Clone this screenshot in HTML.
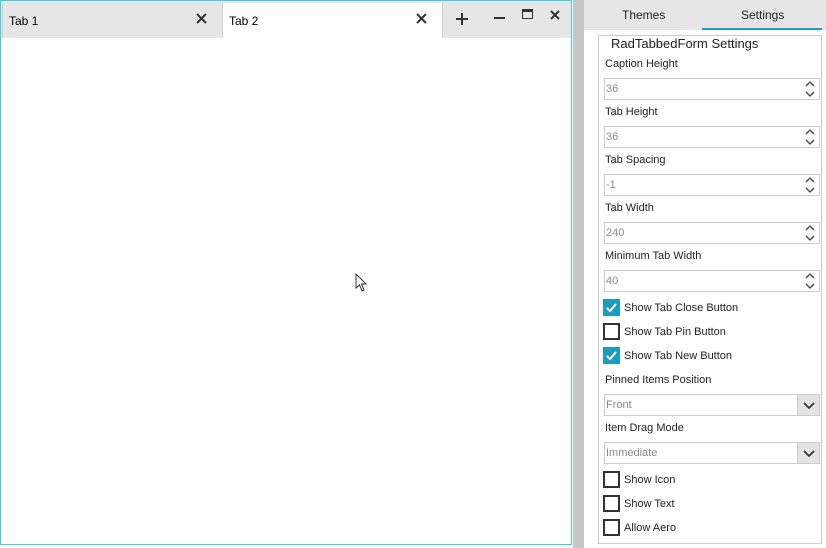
<!DOCTYPE html><html><head><style>
*{margin:0;padding:0;box-sizing:border-box}
body{width:826px;height:548px;background:#fff;font-family:"Liberation Sans",sans-serif;font-size:12px;color:#000;position:relative;overflow:hidden}
.a{position:absolute}
.lbl{position:absolute;left:605px;font-size:11px;color:#222}
.inp{position:absolute;left:604px;width:216px;height:22px;border:1px solid #ccc;background:#fff;color:#888;font-size:11px;padding:4px 0 0 1px}
.sp{position:absolute;right:0;top:0;width:18px;height:20px}
.dd{position:absolute;right:0;top:0;width:22px;height:20px;background:#e3e3e3;border-left:1px solid #ccc}
.cb{position:absolute;left:603px;width:17px;height:17px;border:2px solid #333;background:#fff}
.cb.on{background:#1b9bbf;border-color:#1b9bbf}
.ct{position:absolute;left:624px;font-size:11px;color:#222}
</style></head><body>
<div class="a" style="left:0;top:0;width:572px;height:545px;border:1px solid #3fcaea;background:#fff"></div>
<div class="a" style="left:1px;top:1px;width:570px;height:37px;background:#e6e6e6"></div>
<div class="a" style="left:2px;top:3px;width:220px;height:35px;border-left:1px solid #d0d0d0"></div>
<div class="a" style="left:9px;top:14px;font-size:12px">Tab 1</div>
<svg class="a" style="left:196px;top:13px" width="11" height="11"><path d="M1 1L10 10M10 1L1 10" stroke="#333" stroke-width="2"/></svg>
<div class="a" style="left:222px;top:3px;width:221px;height:35px;background:#fff;border-left:1px solid #d0d0d0;border-right:1px solid #d0d0d0"></div>
<div class="a" style="left:229px;top:14px;font-size:12px">Tab 2</div>
<svg class="a" style="left:416px;top:13px" width="11" height="11"><path d="M1 1L10 10M10 1L1 10" stroke="#333" stroke-width="2"/></svg>
<svg class="a" style="left:456px;top:13px" width="12" height="12"><path d="M6 0V12M0 6H12" stroke="#333" stroke-width="2"/></svg>
<div class="a" style="left:494px;top:17px;width:11px;height:2px;background:#333"></div>
<div class="a" style="left:522px;top:9px;width:11px;height:10px;border:1px solid #333;border-top-width:3px"></div>
<svg class="a" style="left:550px;top:10px" width="10" height="10"><path d="M1 1L9 9M9 1L1 9" stroke="#333" stroke-width="2"/></svg>
<svg class="a" style="left:355px;top:273px" width="14" height="20"><path d="M1 1 L1 15 L4.5 12 L7 18 L9 17 L6.5 11 L11 11 Z" fill="#fff" stroke="#333"/></svg>
<div class="a" style="left:573px;top:0;width:11px;height:548px;background:#c6c6c6"></div>
<div class="a" style="left:584px;top:0;width:242px;height:30px;background:#e6e6e6"></div>
<div class="a" style="left:622px;top:8px;font-size:12px;color:#222">Themes</div>
<div class="a" style="left:702px;top:0;width:120px;height:30px;border-bottom:2px solid #1b9bbf"></div>
<div class="a" style="left:741px;top:8px;font-size:12px;color:#222">Settings</div>
<div class="a" style="left:598px;top:35px;width:224px;height:509px;border:1px solid #ccc"></div>
<div class="a" style="left:611px;top:36px;font-size:13px;color:#222">RadTabbedForm Settings</div>
<svg width="0" height="0" style="position:absolute"><defs><g id="s"><path d="M5 7L9 3L13 7M5 13L9 17L13 13" stroke="#444" stroke-width="1.3" fill="none"/></g><g id="d"><path d="M6 8L11 13L16 8" stroke="#333" stroke-width="1.8" fill="none"/></g></defs></svg>
<div class="lbl" style="top:58px">Caption Height</div>
<div class="inp" style="top:78px">36<svg class="sp"><use href="#s"/></svg></div>
<div class="lbl" style="top:106px">Tab Height</div>
<div class="inp" style="top:126px">36<svg class="sp"><use href="#s"/></svg></div>
<div class="lbl" style="top:154px">Tab Spacing</div>
<div class="inp" style="top:174px">-1<svg class="sp"><use href="#s"/></svg></div>
<div class="lbl" style="top:202px">Tab Width</div>
<div class="inp" style="top:222px">240<svg class="sp"><use href="#s"/></svg></div>
<div class="lbl" style="top:250px">Minimum Tab Width</div>
<div class="inp" style="top:270px">40<svg class="sp"><use href="#s"/></svg></div>
<div class="cb on" style="top:299px"><svg width="13" height="13" style="position:absolute;left:0;top:0"><path d="M2 7 L5 10 L11 3" stroke="#fff" stroke-width="2" fill="none"/></svg></div><div class="ct" style="top:302px">Show Tab Close Button</div>
<div class="cb" style="top:323px"></div><div class="ct" style="top:326px">Show Tab Pin Button</div>
<div class="cb on" style="top:347px"><svg width="13" height="13" style="position:absolute;left:0;top:0"><path d="M2 7 L5 10 L11 3" stroke="#fff" stroke-width="2" fill="none"/></svg></div><div class="ct" style="top:350px">Show Tab New Button</div>
<div class="lbl" style="top:374px">Pinned Items Position</div>
<div class="inp" style="top:394px">Front<svg class="dd"><use href="#d"/></svg></div>
<div class="lbl" style="top:422px">Item Drag Mode</div>
<div class="inp" style="top:442px">Immediate<svg class="dd"><use href="#d"/></svg></div>
<div class="cb" style="top:471px"></div><div class="ct" style="top:474px">Show Icon</div>
<div class="cb" style="top:495px"></div><div class="ct" style="top:498px">Show Text</div>
<div class="cb" style="top:519px"></div><div class="ct" style="top:522px">Allow Aero</div>
</body></html>
